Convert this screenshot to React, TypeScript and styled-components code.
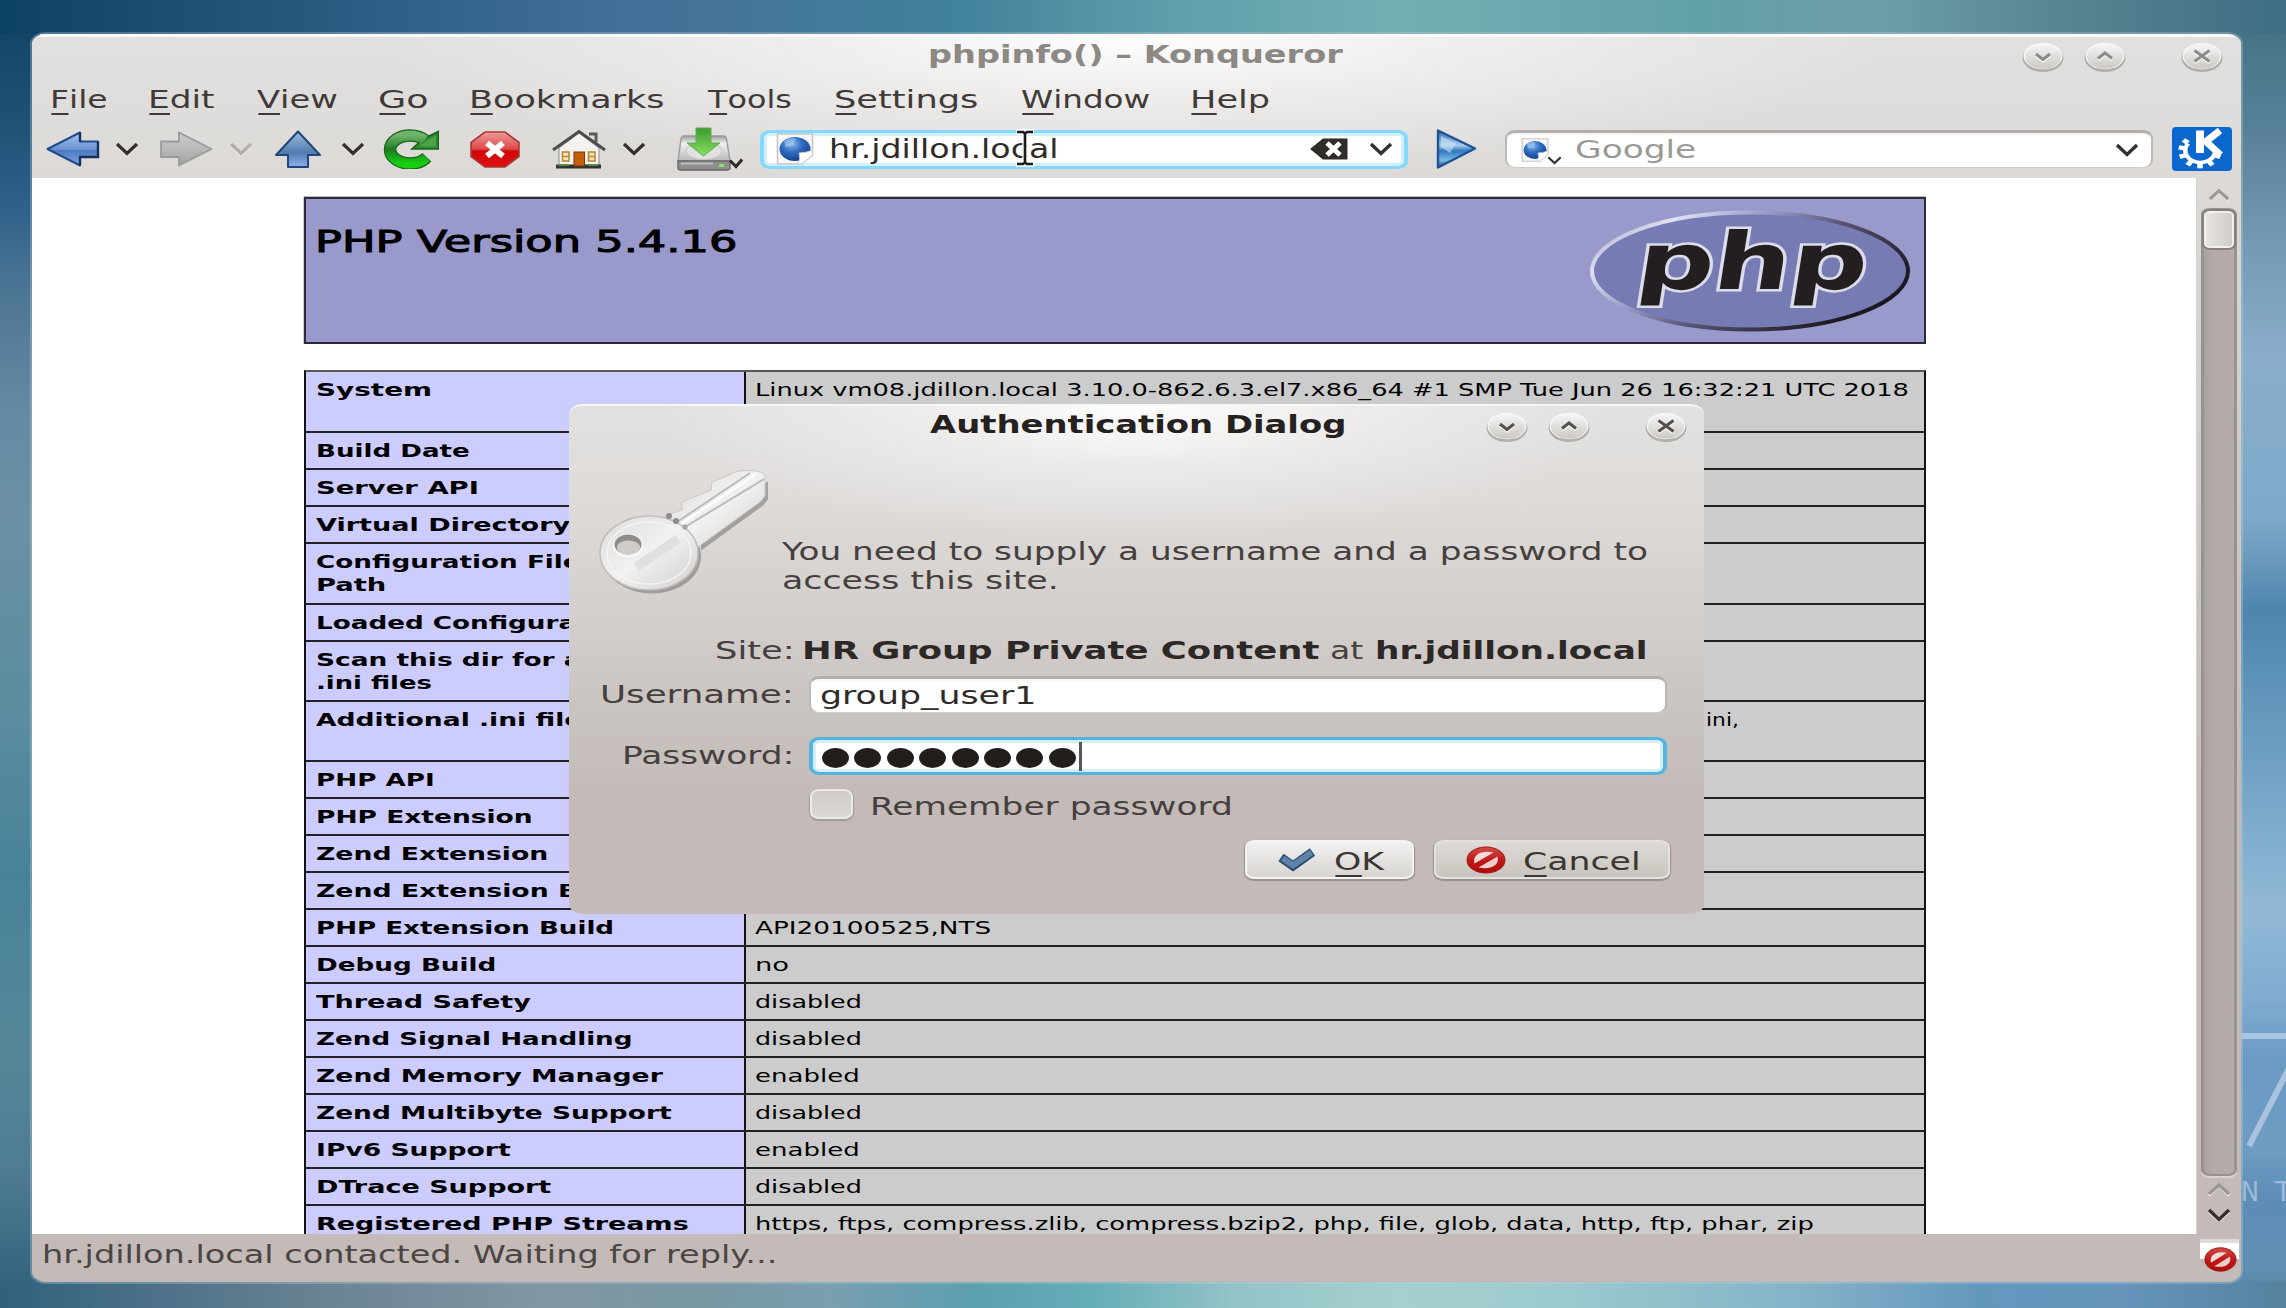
import React, { useLayoutEffect, useRef, useState } from "react";
import styled, { createGlobalStyle } from "styled-components";

const Global = createGlobalStyle`
  html, body { margin: 0; padding: 0; overflow: hidden; }
  *, *::before, *::after { box-sizing: border-box; }
  body { font-family: "DejaVu Sans", "Noto Sans", sans-serif; }
`;

const Desktop = styled.main`
  position: relative;
  width: 2286px;
  height: 1308px;
  padding: 34px 45px 26px 32px;
  overflow: hidden;
  background:
    linear-gradient(90deg, #0c4265 0, #1f5175 210px, #2d6086 390px, #43719a 640px, #437497 730px, #40819b 950px, #5fa0ab 1180px, #74aeb5 1400px, #62a0a8 1700px, #6c9da8 1880px, #54808f 2100px, #3f6d82 2286px) 0 0 / 100% 34px no-repeat,
    linear-gradient(90deg, #31617c 0, #4b7088 150px, #6b8493 330px, #8197a2 540px, #7898a1 700px, #799fb0 830px, #5c9faf 970px, #65adb7 1090px, #95c4c7 1240px, #a5d0d0 1400px, #9ccacd 1560px, #84b3c8 1800px, #6398bd 1980px, #6595bb 2120px, #56829f 2286px) 0 100% / 100% 27px no-repeat,
    linear-gradient(180deg, #0c4265 0, #1d4f74 108px, #2f6189 208px, #4d7695 292px, #658ba3 417px, #6b90a3 517px, #5b8d9f 709px, #478299 876px, #548898 1042px, #4f7c92 1168px, #2d5f7a 1308px) 0 0 / 40px 100% no-repeat,
    linear-gradient(180deg, #41707f 0, #557f95 120px, #7297b1 230px, #8aaecb 360px, #7da8c9 520px, #4f86ad 610px, #6ea0c4 760px, #92b9d6 910px, #80aad0 1000px, #6b9ac4 1060px, #6d9dc2 1150px, #5d8cb6 1200px, #5f90b4 1260px, #56829f 1308px) 100% 0 / 60px 100% no-repeat;
`;

const Wallmark = styled.div`
  position: absolute;
  right: 0;
  top: 1020px;
  width: 45px;
  height: 190px;
`;

const WindowFrame = styled.section`
  display: flex;
  flex-direction: column;
  width: 2209px;
  height: 1248px;
  overflow: hidden;
  border-radius: 14px 14px 15px 15px / 10px 10px 10px 10px;
  background: #c4bbb8;
  box-shadow: 0 0 0 2px rgba(190, 205, 215, 0.35);
`;

const Chrome = styled.header`
  flex: none;
  height: 144px;
  border-top: 3px solid #fbf9f8;
  background:
    radial-gradient(ellipse 760px 135px at 50% 0, rgba(255, 255, 255, 0.95), rgba(255, 255, 255, 0.45) 45%, rgba(255, 255, 255, 0)),
    linear-gradient(#e1e0df, #dfdddb 55%, #dcd9d6);
`;

const TitleBar = styled.div<{ $pad: number }>`
  display: flex;
  justify-content: flex-end;
  align-items: flex-start;
  height: 41px;
  padding-right: ${(p) => p.$pad}px;
`;

const FitBox = styled.span`
  display: block;
  flex: none;
  white-space: pre;
`;
const FitInner = styled.span`
  display: inline-block;
  transform-origin: 0 50%;
`;

/* Wide-pixel text: stretches one line of text to a given width. */
function Fit({ w, children }: { w: number; children: React.ReactNode }) {
  const ref = useRef<HTMLSpanElement>(null);
  const [k, setK] = useState(1.35);
  useLayoutEffect(() => {
    if (ref.current) setK(w / ref.current.offsetWidth);
  }, [w]);
  return (
    <FitBox style={{ width: w }}>
      <FitInner ref={ref} style={{ transform: `scaleX(${k})` }}>{children}</FitInner>
    </FitBox>
  );
}

const WindowTitle = styled.h1<{ $mr: number; $c: string; $lh: number }>`
  margin: 0 ${(p) => p.$mr}px 0 0;
  font-size: 24px;
  line-height: ${(p) => p.$lh}px;
  font-weight: 700;
  color: ${(p) => p.$c};
`;

const RoundButton = styled.span<{ $ml: number; $mt: number }>`
  display: block;
  flex: none;
  width: 44px;
  height: 32px;
  margin: ${(p) => p.$mt}px 0 0 ${(p) => p.$ml}px;
`;

type Mark = "down" | "up" | "close";
function Knob({ kind, ml, mt, tone }: { kind: Mark; ml: number; mt: number; tone: string }) {
  const d = { down: "M15 13 L22 18.5 L29 13", up: "M15 17.5 L22 12 L29 17.5", close: "M14.5 9.5 L29.5 20.5 M29.5 9.5 L14.5 20.5" }[kind];
  return (
    <RoundButton $ml={ml} $mt={mt}>
      <svg width="44" height="32" viewBox="0 0 44 32">
        <defs>
          <linearGradient id="knob" x1="0" y1="0" x2="0" y2="1">
            <stop offset="0" stopColor="#f6f5f4" /><stop offset="1" stopColor="#cbc8c4" />
          </linearGradient>
        </defs>
        <ellipse cx="22" cy="17" rx="20.5" ry="14" fill="#a29d99" opacity=".75" />
        <ellipse cx="22" cy="15" rx="19.5" ry="13.3" fill="#f7f6f5" />
        <ellipse cx="22" cy="15.6" rx="18" ry="12.2" fill="url(#knob)" />
        <path d={d} transform="translate(0 1.4)" fill="none" stroke="#fff" strokeWidth="3" />
        <path d={d} fill="none" stroke={tone} strokeWidth="3" />
      </svg>
    </RoundButton>
  );
}

const MenuBar = styled.nav`
  display: flex;
  height: 44px;
  font-size: 25px;
  line-height: 44px;
  color: #3f3a37;
`;
const MenuItem = styled.div<{ $ml: number }>`
  flex: none;
  margin-left: ${(p) => p.$ml}px;
`;
const Mnemonic = styled.span`
  position: relative;
  &::after {
    content: "";
    position: absolute;
    left: 1px;
    right: 0;
    bottom: -1px;
    height: 2px;
    background: currentColor;
  }
`;

const menus: [string, number, number][] = [
  ["File", 50, 58], ["Edit", 148, 66], ["View", 257, 81], ["Go", 378, 51], ["Bookmarks", 469, 196],
  ["Tools", 708, 84], ["Settings", 834, 145], ["Window", 1021, 129], ["Help", 1190, 80],
];

const Toolbar = styled.div`
  display: flex;
  align-items: center;
  height: 56px;
  padding-bottom: 2px;
`;
const Tool = styled.span<{ $ml: number; $mt?: number }>`
  display: block;
  flex: none;
  line-height: 0;
  margin-left: ${(p) => p.$ml}px;
  margin-top: ${(p) => p.$mt ?? 0}px;
`;

function Chevron({ tone = "#35302e", up = false, w = 24 }: { tone?: string; up?: boolean; w?: number }) {
  return (
    <svg width={w} height={w * 0.6} viewBox="0 0 24 14.4">
      <path d={up ? "M2 13.6 L12 4.2 L22 13.6" : "M2 3.8 L12 13 L22 3.8"} fill="none" stroke="#f4f3f2" strokeWidth="2.4" />
      <path d={up ? "M2 12 L12 3 L22 12" : "M2 2 L12 11.4 L22 2"} fill="none" stroke={tone} strokeWidth="3.4" />
    </svg>
  );
}

function IconDefs() {
  return (
    <svg width="0" height="0" style={{ position: "absolute" }}>
      <defs>
        <linearGradient id="blue" x1="0" y1="0" x2="0" y2="1"><stop offset="0" stopColor="#a9c3ea" /><stop offset=".5" stopColor="#6c93d3" /><stop offset=".55" stopColor="#4d79bd" /><stop offset="1" stopColor="#7fa6e6" /></linearGradient>
        <linearGradient id="blueUp" x1="0" y1="0" x2="0" y2="1"><stop offset="0" stopColor="#9dc0dc" /><stop offset=".6" stopColor="#527aae" /><stop offset="1" stopColor="#8cb0f2" /></linearGradient>
        <linearGradient id="grey" x1="0" y1="0" x2="0" y2="1"><stop offset="0" stopColor="#cfcdcb" /><stop offset="1" stopColor="#a5a3a1" /></linearGradient>
        <linearGradient id="green" x1="0" y1="0" x2="0" y2="1"><stop offset="0" stopColor="#6fb26c" /><stop offset=".5" stopColor="#1f7a22" /><stop offset="1" stopColor="#16d010" /></linearGradient>
        <linearGradient id="leaf" x1="0" y1="0" x2="0" y2="1"><stop offset="0" stopColor="#3f9a33" /><stop offset="1" stopColor="#86e05c" /></linearGradient>
        <linearGradient id="red" x1="0" y1="0" x2="0" y2="1"><stop offset="0" stopColor="#ee9a9a" /><stop offset=".48" stopColor="#dd4a4a" /><stop offset=".55" stopColor="#d20606" /><stop offset="1" stopColor="#e01010" /></linearGradient>
        <linearGradient id="ban" x1="0" y1="0" x2="0" y2="1"><stop offset="0" stopColor="#cf4a48" /><stop offset=".5" stopColor="#c11a17" /><stop offset="1" stopColor="#b00a06" /></linearGradient>
        <linearGradient id="metal" x1="0" y1="0" x2="0" y2="1"><stop offset="0" stopColor="#9d9d9d" /><stop offset=".3" stopColor="#f0f0f0" /><stop offset="1" stopColor="#b9b9b9" /></linearGradient>
        <linearGradient id="play" x1="0" y1="0" x2="0" y2="1"><stop offset="0" stopColor="#2f66ae" /><stop offset=".4" stopColor="#a7cdec" /><stop offset=".55" stopColor="#2f78bd" /><stop offset=".8" stopColor="#79b9e6" /><stop offset="1" stopColor="#1d4c88" /></linearGradient>
        <radialGradient id="globe" cx=".4" cy=".3" r=".75"><stop offset="0" stopColor="#8db9ec" /><stop offset=".45" stopColor="#2d6cc0" /><stop offset="1" stopColor="#143c8a" /></radialGradient>
        <linearGradient id="rim" x1="0" y1="0" x2="1" y2=".55"><stop offset="0" stopColor="#8d8fbd" /><stop offset=".22" stopColor="#dfe0f0" /><stop offset=".42" stopColor="#9b9ccb" /><stop offset=".65" stopColor="#55536f" /><stop offset="1" stopColor="#1b1820" /></linearGradient>
        <linearGradient id="steel" x1="0" y1="0" x2="1" y2="1"><stop offset="0" stopColor="#dcdcdb" /><stop offset=".5" stopColor="#f1f1f1" /><stop offset="1" stopColor="#cfcfcf" /></linearGradient>
      </defs>
    </svg>
  );
}

const BackIcon = () => (
  <svg width="54" height="36" viewBox="0 0 54 36">
    <path d="M1.5 18 L34 1.5 V10.5 H52 V26 H34 V34.5 Z" fill="url(#blue)" stroke="#1f4c8c" strokeWidth="2" strokeLinejoin="round" />
    <path d="M34 10.5 V1.5 M52 10.5 V26 H34 V34.5" fill="none" stroke="#142f5a" strokeWidth="2.4" />
  </svg>
);
const ForwardIcon = () => (
  <svg width="54" height="36" viewBox="0 0 54 36">
    <path d="M52.5 18 L20 1.5 V10.5 H2 V26 H20 V34.5 Z" fill="url(#grey)" stroke="#9c9a98" strokeWidth="1.8" strokeLinejoin="round" />
  </svg>
);
const UpIcon = () => (
  <svg width="48" height="38" viewBox="0 0 48 38">
    <path d="M24 1.5 L46 25 H34 V37 H14 V25 H2 Z" fill="url(#blueUp)" stroke="#1f4678" strokeWidth="2" strokeLinejoin="round" />
  </svg>
);
const ReloadIcon = () => (
  <svg width="56" height="40" viewBox="0 0 56 40">
    <ellipse cx="27" cy="20.500" rx="20" ry="14" fill="none" stroke="#17641b" strokeWidth="12.500" pathLength="100" strokeDasharray="82 18" strokeDashoffset="-8" />
    <path d="M55.500 2.500 V20 H29 L40 10 Z" fill="#2b8a2c" stroke="#17641b" strokeWidth="1.6" />
    <ellipse cx="27" cy="20.500" rx="20" ry="14" fill="none" stroke="url(#green)" strokeWidth="10" pathLength="100" strokeDasharray="81 19" strokeDashoffset="-8.500" />
    <path d="M53 6.500 V17.500 H36 L44 11.500 Z" fill="#4ea248" />
  </svg>
);
const StopIcon = () => (
  <svg width="50" height="37" viewBox="0 0 50 37">
    <path d="M15 1 H35 L49 11.5 V25.5 L35 36 H15 L1 25.5 V11.5 Z" fill="url(#red)" stroke="#a83a38" strokeWidth="1.6" />
    <path d="M17 12 L33 25 M33 12 L17 25" stroke="#fff" strokeWidth="6" />
  </svg>
);
const HomeIcon = () => (
  <svg width="56" height="41" viewBox="0 0 56 41">
    <path d="M38 5 H45 V13" fill="none" stroke="#5a5a5a" strokeWidth="3" />
    <path d="M8 19 L28 4 L48 19 V37 H8 Z" fill="#f2f2f0" stroke="#8b8b88" strokeWidth="1" />
    <path d="M2 21 L28 2.5 L54 21" fill="none" stroke="#4b4d4f" strokeWidth="3" />
    <path d="M5 37.5 H50" stroke="#2f3332" strokeWidth="4" />
    <path d="M7 36 H18 M37 36 H47" stroke="#5d8a46" strokeWidth="2" />
    <rect x="23" y="23" width="10.5" height="14" fill="#c2610a" stroke="#7a3a06" />
    <g fill="#f4e3b6" stroke="#b98a3c" strokeWidth="1.6">
      <rect x="11.5" y="23" width="6.5" height="9" /><rect x="37.5" y="23" width="6.5" height="9" />
    </g>
    <path d="M11.5 27.5 H18 M37.5 27.5 H44" stroke="#b98a3c" strokeWidth="1.4" />
  </svg>
);
const DownloadIcon = () => (
  <svg width="66" height="44" viewBox="0 0 66 44">
    <path d="M7 9 H46 Q49 9 49.5 12 L53 34 H1 L4 12 Q4.500 9 7 9 Z" fill="url(#metal)" stroke="#9b9b9b" strokeWidth="1.4" />
    <ellipse cx="27" cy="24" rx="18" ry="8.500" fill="#e2e2e2" stroke="#c4c4c4" />
    <path d="M1 34 H53 V41 Q53 43 50 43 H4 Q1 43 1 41 Z" fill="#8f8f8f" stroke="#686868" strokeWidth="1.4" />
    <path d="M4 36.500 H36" stroke="#bdbdbd" strokeWidth="2" />
    <rect x="42" y="37" width="5" height="3" fill="#8fe06a" />
    <path d="M19 1 H34 V16 H43 L26.500 29 L10 16 H19 Z" fill="url(#leaf)" stroke="#5bb048" strokeWidth="1" />
    <path d="M53 33.500 L59 39.500 L65 32.500" fill="none" stroke="#2e2a28" strokeWidth="3" />
  </svg>
);
const PageIcon = ({ w, h }: { w: number; h: number }) => (
  <svg width={w} height={h} viewBox="0 0 38 32" preserveAspectRatio="none">
    <path d="M1.500 1 H36.500 V22 L26 31 H1.500 Z" fill="#f7f7f8" stroke="#c6c6ca" strokeWidth="1.6" />
    <ellipse cx="19" cy="16" rx="15.500" ry="12" fill="url(#globe)" />
    <path d="M8 8 Q15 4 20 6 L17 12 L10 14 Z" fill="#a9cdf3" opacity=".6" />
    <path d="M23 20 Q30 20 36.500 17 V22 L26 31 H22 Q25 25 23 20 Z" fill="#fdfdfd" stroke="#c9c9cd" strokeWidth="1" />
  </svg>
);
const ClearIcon = () => (
  <svg width="40" height="24" viewBox="0 0 40 24">
    <path d="M1 12 L14 1.500 H38.500 V22.500 H14 Z" fill="#302c2a" />
    <path d="M18 6 L31 18 M31 6 L18 18" stroke="#fff" strokeWidth="5" />
  </svg>
);
const PlayIcon = () => (
  <svg width="41" height="40" viewBox="0 0 41 40">
    <path d="M2 1.500 L39 19.500 L2 38.500 Z" fill="url(#play)" stroke="#1e5196" strokeWidth="2.400" strokeLinejoin="round" />
    <path d="M5 7 L20 14 L14 24 L5 18 Z" fill="#d3e8f8" opacity=".55" />
  </svg>
);
const KdeIcon = () => {
  const teeth = [20, 55, 90, 125, 160, 192, 220];
  return (
    <svg width="60" height="44" viewBox="0 0 60 44">
      <rect x="0" y="0" width="60" height="44" rx="4" fill="#0a68cc" />
      <g transform="translate(28 24) scale(1.25 1)">
        <path d="M -9.5 -7.500 A 12 12 0 1 0 12 2" fill="none" stroke="#fff" strokeWidth="3.600" />
        {teeth.map((a) => (
          <rect key={a} x="12.500" y="-2.200" width="4.800" height="4.400" fill="#fff" transform={`rotate(${a})`} />
        ))}
      </g>
      <path d="M28 3.500 V26" stroke="#fff" strokeWidth="8" />
      <path d="M48 3.500 L34 14.500 L48.500 28" fill="none" stroke="#fff" strokeWidth="7" />
    </svg>
  );
};

const Field = styled.div<{ $ml: number; $w: number; $h: number; $focus?: string }>`
  display: flex;
  align-items: center;
  flex: none;
  margin-left: ${(p) => p.$ml}px;
  width: ${(p) => p.$w}px;
  height: ${(p) => p.$h}px;
  border: 3px solid ${(p) => p.$focus ?? "#b9b5b2"};
  ${(p) => (p.$focus ? "border-width: 3px 4px;" : "border-width: 3px 2px 1px; border-color: #b2aeab #bdb9b6 #cfccc9;")}
  border-radius: 11px / 8px;
  background: #fff;
  box-shadow: ${(p) => (p.$focus ? "inset 0 0 0 3px rgba(160, 220, 245, 0.45)" : "inset 0 2px 0 rgba(0, 0, 0, 0.04)")};
  font-size: 25px;
  line-height: 32px;
  color: #2f2b29;
`;
const Hint = styled.span`
  color: #9a9896;
  margin-left: 13px;
`;
const Typed = styled.span<{ $ml: number; $size?: number }>`
  margin-left: ${(p) => p.$ml}px;
  font-size: ${(p) => p.$size ?? 25}px;
`;
const FieldSpace = styled.span`
  flex: 1;
`;
const Pointer = styled.div`
  position: absolute;
  left: 1013px;
  top: 129px;
  line-height: 0;
`;

const Body = styled.div`
  display: flex;
  flex: none;
  height: 1056px;
`;
const Page = styled.article`
  width: 2164px;
  height: 1056px;
  padding: 19px 0 0 272px;
  overflow: hidden;
  background: #fff;
  color: #000;
`;
const PhpHeader = styled.div`
  display: flex;
  justify-content: space-between;
  width: 1622px;
  height: 147px;
  padding: 11px 13px 0 9px;
  border: 2px solid #2a2a3a;
  background: #9999cc;
  box-shadow: 0 -1px 0 #bbb, -1px 0 0 #ccc;
`;
const PhpTitle = styled.h2`
  margin: 12px 0 0;
  font-size: 30px;
  line-height: 40px;
  font-weight: 400;
  -webkit-text-stroke: 1px #000;
`;

const InfoTable = styled.div`
  width: 1622px;
  margin-top: 26px;
  border: 2px solid #111;
  border-top-color: #55555a;
  border-bottom: 0;
  background: #ccc;
`;
const InfoRow = styled.div<{ $h: number }>`
  display: flex;
  height: ${(p) => p.$h}px;
  border-bottom: 2px solid #222226;
  font-size: 18.500px;
  line-height: 23.400px;
`;
const Label = styled.div`
  flex: none;
  width: 440px;
  padding: 5.500px 0 0 10px;
  border-right: 2px solid #111;
  background: #ccccff;
  font-weight: 700;
`;
const Value = styled.div<{ $pl?: number }>`
  padding: 5.500px 0 0 ${(p) => p.$pl ?? 9}px;
`;

type Line = [string, number];
type Info = { h: number; label: Line[]; value?: Line; pl?: number };
const rows: Info[] = [
  { h: 61, label: [["System", 116]], value: ["Linux vm08.jdillon.local 3.10.0-862.6.3.el7.x86_64 #1 SMP Tue Jun 26 16:32:21 UTC 2018", 1154] },
  { h: 37, label: [["Build Date", 154]] },
  { h: 37, label: [["Server API", 163]] },
  { h: 37, label: [["Virtual Directory Support", 386]] },
  { h: 61, label: [["Configuration File (php.ini)", 400], ["Path", 71]] },
  { h: 37, label: [["Loaded Configuration File", 381]] },
  { h: 60, label: [["Scan this dir for additional", 398], [".ini files", 116]] },
  { h: 60, label: [["Additional .ini files parsed", 395]], value: ["ini,", 33], pl: 960 },
  { h: 37, label: [["PHP API", 119]] },
  { h: 37, label: [["PHP Extension", 216]] },
  { h: 37, label: [["Zend Extension", 232]] },
  { h: 37, label: [["Zend Extension Build", 319]] },
  { h: 37, label: [["PHP Extension Build", 298]], value: ["API20100525,NTS", 236] },
  { h: 37, label: [["Debug Build", 180]], value: ["no", 34] },
  { h: 37, label: [["Thread Safety", 215]], value: ["disabled", 107] },
  { h: 37, label: [["Zend Signal Handling", 317]], value: ["disabled", 107] },
  { h: 37, label: [["Zend Memory Manager", 347]], value: ["enabled", 104] },
  { h: 37, label: [["Zend Multibyte Support", 356]], value: ["disabled", 107] },
  { h: 37, label: [["IPv6 Support", 194]], value: ["enabled", 104] },
  { h: 37, label: [["DTrace Support", 235]], value: ["disabled", 107] },
  { h: 60, label: [["Registered PHP Streams", 373]], value: ["https, ftps, compress.zlib, compress.bzip2, php, file, glob, data, http, ftp, phar, zip", 1059] },
];

const ScrollBar = styled.aside`
  display: flex;
  flex-direction: column;
  align-items: center;
  width: 45px;
  padding: 10px 0 0;
  border-left: 1px solid #d6d2cf;
  background: linear-gradient(#dcd9d6, #cfcac7 300px, #c4bbb8 620px);
`;
const Groove = styled.div`
  width: 36px;
  height: 968px;
  margin: 7px 0 6px;
  border: 2px solid #98938f;
  border-width: 2px 3px;
  border-radius: 9px / 6px;
  background: linear-gradient(90deg, #aaa29e, #b4aaa7 30%, #b5acaa);
  box-shadow: 0 2px 0 #d8d3d0;
`;
const Thumb = styled.div`
  height: 41px;
  margin: -1px -2px 0;
  border: 2px solid #85807c;
  border-radius: 8px / 6px;
  background: linear-gradient(90deg, #e8e6e4, #d9d6d3 60%, #cdcac6);
  box-shadow: inset 0 0 0 2px #f1f0ee;
`;

const StatusBar = styled.footer`
  display: flex;
  justify-content: space-between;
  height: 48px;
  padding: 0 2px 0 10px;
  border-bottom: 1px solid #bdb6b4;
  font-size: 25.500px;
  line-height: 41px;
  color: #4b4643;
`;
const StopBadge = styled.span`
  display: block;
  align-self: flex-start;
  height: 36px;
  margin-top: 5px;
  padding: 8px 2px 0 4px;
  line-height: 0;
  background: linear-gradient(#dddcdb 0 4px, #fff 4px 20px, transparent 20px);
`;

const Dialog = styled.section`
  position: absolute;
  left: 569px;
  top: 404px;
  width: 1135px;
  height: 510px;
  border-radius: 14px / 10px;
  border-top: 2px solid #f8f7f6;
  background:
    radial-gradient(ellipse 480px 135px at 50% 0, rgba(255, 255, 255, 0.95), rgba(255, 255, 255, 0.4) 45%, rgba(255, 255, 255, 0)),
    linear-gradient(#e3e1df, #dedbd9 90px, #d6d2cf 180px, #cfcac7 250px, #c8c2be 320px, #c4bbb8 385px, #c4bab7);
  font-size: 25px;
  color: #45403d;
`;
const Intro = styled.div`
  display: flex;
  align-items: flex-start;
  height: 186px;
  padding: 23px 0 0 29px;
`;
const Message = styled.div`
  margin: 67px 0 0 6px;
  line-height: 29.200px;
`;
const FormRow = styled.div<{ $mt: number; $h: number }>`
  display: flex;
  height: ${(p) => p.$h}px;
  margin-top: ${(p) => p.$mt}px;
  line-height: ${(p) => p.$h}px;
`;
const FormLabel = styled.div`
  display: flex;
  justify-content: flex-end;
  flex: none;
  width: 225px;
`;
const SiteText = styled.div`
  display: flex;
  margin-left: 8px;
  color: #45403d;
  b { color: #2c2826; }
`;
const Gap = styled.span<{ $w: number; $h?: number }>`
  flex: none;
  width: ${(p) => p.$w}px;
  height: ${(p) => p.$h ?? 0}px;
`;
const Dots = styled.span`
  display: flex;
  gap: 5.400px;
  margin: 3px 0 0 9px;
`;
const Dot = styled.i`
  width: 27px;
  height: 20px;
  border-radius: 50%;
  background: #231d1b;
`;
const Caret = styled.i`
  width: 3px;
  height: 29px;
  margin-left: 3px;
  background: #5a5654;
`;
const CheckBox = styled.span`
  flex: none;
  width: 43px;
  height: 30px;
  margin: 0 0 0 241px;
  border: 2px solid #eceae7;
  border-radius: 9px / 7px;
  background: linear-gradient(#d0ccc7, #dbd8d4);
  box-shadow: 0 1px 1px 1px #a39c98;
`;
const Remember = styled.span`
  margin: 2px 0 0 17px;
`;
const Button = styled.button<{ $w: number; $ml: number; $hot?: boolean }>`
  display: flex;
  align-items: center;
  flex: none;
  width: ${(p) => p.$w}px;
  height: 39px;
  margin: 0 0 0 ${(p) => p.$ml}px;
  padding: 0 0 0 30px;
  border: 2px solid ${(p) => (p.$hot ? "#f5f4f3" : "#e3e0dd")};
  border-radius: 10px / 7px;
  background: ${(p) => (p.$hot ? "linear-gradient(#f2f1f0, #d8d5d1)" : "linear-gradient(#dddad7, #c9c5be)")};
  box-shadow: 0 1px 1px 1px #979190;
  font: 25px/35px "DejaVu Sans", sans-serif;
  color: #3b3633;
  text-align: left;
`;
const ButtonText = styled.span<{ $ml: number }>`
  margin: 3px 0 0 ${(p) => p.$ml}px;
`;

const BanIcon = ({ w, h }: { w: number; h: number }) => (
  <svg width={w} height={h} viewBox="0 0 40 28" preserveAspectRatio="none">
    <ellipse cx="20" cy="14" rx="19.500" ry="13.600" fill="#a31d1a" />
    <ellipse cx="20" cy="14" rx="18.300" ry="12.500" fill="url(#ban)" />
    <path d="M8.500 17.500 C6 9 15 4 27.500 6.500 Z" fill="#f1dcdb" />
    <path d="M31.500 10.500 C34 19 25 24 12.500 21.500 Z" fill="#eccfcd" />
  </svg>
);
const CheckIcon = () => (
  <svg width="40" height="24" viewBox="0 0 40 24">
    <path d="M4 9.500 L16 18 L35.500 4" fill="none" stroke="#2d4d70" strokeWidth="9" />
    <path d="M5.500 10.200 L16 17.400 L34.500 4.500" fill="none" stroke="#5d83ab" strokeWidth="6" />
  </svg>
);
const KeyIcon = () => (
  <svg width="178" height="126" viewBox="0 0 178 126">
    <g transform="translate(3 3.500)" opacity=".45" fill="#5f5b58">
      <path d="M100 50 L167 8 V26 L162 32 L100 77 Z" />
      <ellipse cx="51" cy="83" rx="49" ry="37" />
    </g>
    <path d="M72 44 L84 40 L84 32 L113 20 L114 12 L140 1 Q163 -1 167 5 V26 L162 32 L100 77 L75 60 Z" fill="url(#steel)" stroke="#c9c8c7" strokeWidth="1" />
    <path d="M79 52 L152 3 M87 57 L166 9" stroke="#bcbbba" strokeWidth="2" />
    <path d="M83 54 L158 4" stroke="#fff" strokeWidth="2.400" />
    <ellipse cx="51" cy="83" rx="49" ry="37" fill="url(#steel)" stroke="#bfbebd" strokeWidth="1.500" />
    <ellipse cx="51" cy="83" rx="42" ry="31" fill="none" stroke="#f4f4f4" strokeWidth="1.500" />
    <path d="M38 97 L80 69" stroke="#dfdfde" strokeWidth="9" />
    <ellipse cx="30" cy="75.500" rx="15" ry="11.500" fill="#f8f8f8" />
    <ellipse cx="30" cy="74.500" rx="13.500" ry="10" fill="#8f8c89" />
    <ellipse cx="30.500" cy="77.500" rx="11.500" ry="7" fill="#cfccc9" />
    <circle cx="71" cy="46" r="3" fill="#8f8d8b" /><circle cx="78" cy="51" r="3" fill="#8f8d8b" /><circle cx="87" cy="57" r="2.600" fill="#a5a3a1" />
  </svg>
);

const PhpLogo = () => (
  <svg width="322" height="122" viewBox="0 0 322 122">
    <ellipse cx="161" cy="61" rx="158" ry="58.500" fill="#777bb3" stroke="url(#rim)" strokeWidth="4" />
    <g transform="translate(52 79) skewX(-9)" fontFamily="DejaVu Sans" fontWeight="700" fontSize="79" fill="#231f20" stroke="#dcdcea" strokeWidth="5">
      <text x="-7" y="0" textLength="230" lengthAdjust="spacingAndGlyphs" style={{ paintOrder: "stroke" }}>php</text>
    </g>
  </svg>
);

export default function App() {
  return (
    <Desktop>
      <Global />
      <IconDefs />
      <Wallmark>
        <svg width="45" height="190" viewBox="0 0 45 190">
          <path d="M0 16 H45" stroke="#a9c5e2" strokeWidth="6" />
          <path d="M8 126 L48 48" stroke="#a9c3de" strokeWidth="6" />
          <text x="0" y="181" fontFamily="DejaVu Sans" fontSize="27" fill="#9dbddb" textLength="18" lengthAdjust="spacingAndGlyphs">N</text>
          <text x="34" y="181" fontFamily="DejaVu Sans" fontSize="27" fill="#9dbddb">T</text>
        </svg>
      </Wallmark>
      <WindowFrame>
        <Chrome>
          <TitleBar $pad={17}>
            <WindowTitle $mr={678} $c="#8c8884" $lh={37}><Fit w={415}>phpinfo() – Konqueror</Fit></WindowTitle>
            <Knob kind="down" ml={0} mt={4} tone="#8f8b88" />
            <Knob kind="up" ml={18} mt={4} tone="#8f8b88" />
            <Knob kind="close" ml={53} mt={4} tone="#8f8b88" />
          </TitleBar>
          <MenuBar>
            {menus.map(([name, x, w], i) => (
              <MenuItem key={name} $ml={x - (i ? menus[i - 1][1] + menus[i - 1][2] : 32)}>
                <Fit w={w}><Mnemonic>{name[0]}</Mnemonic>{name.slice(1)}</Fit>
              </MenuItem>
            ))}
          </MenuBar>
          <Toolbar>
            <Tool $ml={14}><BackIcon /></Tool>
            <Tool $ml={15}><Chevron /></Tool>
            <Tool $ml={20}><ForwardIcon /></Tool>
            <Tool $ml={16}><Chevron tone="#b1aeab" /></Tool>
            <Tool $ml={21}><UpIcon /></Tool>
            <Tool $ml={19}><Chevron /></Tool>
            <Tool $ml={18}><ReloadIcon /></Tool>
            <Tool $ml={31}><StopIcon /></Tool>
            <Tool $ml={31}><HomeIcon /></Tool>
            <Tool $ml={15}><Chevron /></Tool>
            <Tool $ml={31}><DownloadIcon /></Tool>
            <Field $ml={17} $w={648} $h={39} $focus="#82d9ff">
              <Tool $ml={12}><PageIcon w={38} h={32} /></Tool>
              <Typed $ml={15} $size={27}><Fit w={230}>hr.jdillon.local</Fit></Typed>
              <FieldSpace />
              <Tool $ml={0}><ClearIcon /></Tool>
              <Tool $ml={20}><Chevron /></Tool>
              <Tool $ml={11} />
            </Field>
            <Tool $ml={28}><PlayIcon /></Tool>
            <Field $ml={28} $w={648} $h={38}>
              <Tool $ml={14}><PageIcon w={28} h={24} /></Tool>
              <Tool $ml={-2} $mt={20}><Chevron w={15} /></Tool>
              <Hint><Fit w={121}>Google</Fit></Hint>
              <FieldSpace />
              <Tool $ml={0}><Chevron /></Tool>
              <Tool $ml={12} />
            </Field>
            <Tool $ml={19}><KdeIcon /></Tool>
          </Toolbar>
        </Chrome>
        <Body>
          <Page>
            <PhpHeader>
              <PhpTitle><Fit w={423}>PHP Version 5.4.16</Fit></PhpTitle>
              <PhpLogo />
            </PhpHeader>
            <InfoTable>
              {rows.map((r) => (
                <InfoRow key={r.label[0][0]} $h={r.h}>
                  <Label>{r.label.map(([t, w]) => <Fit key={t} w={w}>{t}</Fit>)}</Label>
                  <Value $pl={r.pl}>{r.value && <Fit w={r.value[1]}>{r.value[0]}</Fit>}</Value>
                </InfoRow>
              ))}
            </InfoTable>
          </Page>
          <ScrollBar>
            <Chevron up tone="#9b9794" w={22} />
            <Groove><Thumb /></Groove>
            <Chevron up tone="#9b9794" />
            <Gap $w={1} $h={11} />
            <Chevron />
          </ScrollBar>
        </Body>
        <StatusBar>
          <Fit w={736}>hr.jdillon.local contacted. Waiting for reply...</Fit>
          <StopBadge><BanIcon w={33} h={25} /></StopBadge>
        </StatusBar>
      </WindowFrame>

      <Pointer>
        <svg width="24" height="38" viewBox="0 0 24 38">
          <path d="M3 3 H10 L12 4.500 L14 3 H21 M12 4 V34 M3 35 H10 L12 33.500 L14 35 H21" fill="none" stroke="#fff" strokeWidth="6" opacity=".8" />
          <path d="M4 3 H10 L12 4.500 L14 3 H20 M12 4 V34 M4 35 H10 L12 33.500 L14 35 H20" fill="none" stroke="#1b1b1b" strokeWidth="2.600" />
        </svg>
      </Pointer>

      <Dialog>
        <TitleBar $pad={16}>
          <WindowTitle $mr={138} $c="#25211f" $lh={39}><Fit w={417}>Authentication Dialog</Fit></WindowTitle>
          <Knob kind="down" ml={0} mt={5} tone="#55504d" />
          <Knob kind="up" ml={18} mt={5} tone="#55504d" />
          <Knob kind="close" ml={53} mt={5} tone="#55504d" />
        </TitleBar>
        <Intro>
          <KeyIcon />
          <Message>
            <Fit w={866}>You need to supply a username and a password to</Fit>
            <Fit w={277}>access this site.</Fit>
          </Message>
        </Intro>
        <FormRow $mt={0} $h={36}>
          <FormLabel><Fit w={79}>Site:</Fit></FormLabel>
          <SiteText>
            <b><Fit w={517}>HR Group Private Content</Fit></b>
            <Gap $w={11} />
            <Fit w={33}>at</Fit>
            <Gap $w={12} />
            <b><Fit w={273}>hr.jdillon.local</Fit></b>
          </SiteText>
        </FormRow>
        <FormRow $mt={7} $h={37}>
          <FormLabel><Fit w={194}>Username:</Fit></FormLabel>
          <Field $ml={15} $w={858} $h={37}><Typed $ml={9}><Fit w={217}>group_user1</Fit></Typed></Field>
        </FormRow>
        <FormRow $mt={24} $h={37}>
          <FormLabel><Fit w={172}>Password:</Fit></FormLabel>
          <Field $ml={15} $w={858} $h={38} $focus="#55b3e0">
            <Dots>{Array.from({ length: 8 }, (_, i) => <Dot key={i} />)}</Dots>
            <Caret />
          </Field>
        </FormRow>
        <FormRow $mt={15} $h={31}>
          <CheckBox />
          <Remember><Fit w={363}>Remember password</Fit></Remember>
        </FormRow>
        <FormRow $mt={20} $h={40}>
          <Button $w={169} $ml={676} $hot>
            <CheckIcon />
            <ButtonText $ml={17}><Fit w={50}><Mnemonic>O</Mnemonic>K</Fit></ButtonText>
          </Button>
          <Button $w={236} $ml={20}>
            <BanIcon w={40} h={28} />
            <ButtonText $ml={17}><Fit w={118}><Mnemonic>C</Mnemonic>ancel</Fit></ButtonText>
          </Button>
        </FormRow>
      </Dialog>
    </Desktop>
  );
}
